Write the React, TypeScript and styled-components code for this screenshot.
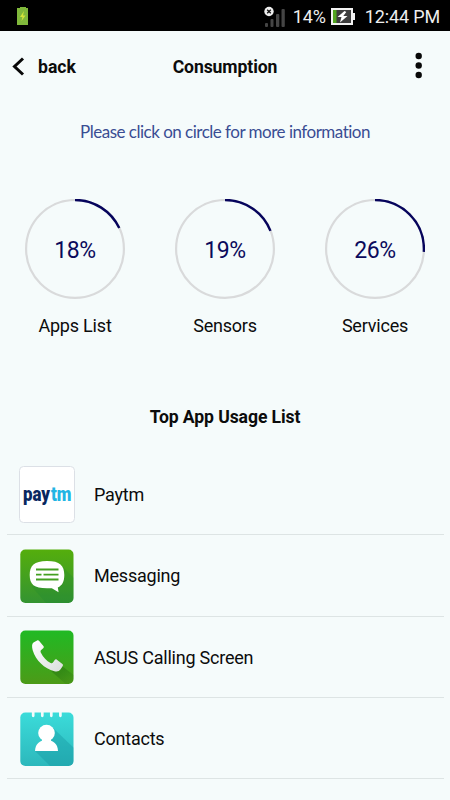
import React from 'react';
import styled, { createGlobalStyle } from 'styled-components';

const GlobalStyle = createGlobalStyle`
  * { box-sizing: border-box; }
  body { margin: 0; background: #f5fbfb; overflow: hidden; }
  svg { display: block; flex: none; }
`;

const Screen = styled.main`
  width: 450px;
  height: 800px;
  overflow: hidden;
  display: flex;
  flex-direction: column;
  background: #f5fbfb;
  color: #0c0c0c;
  font-family: Roboto, 'Liberation Sans', sans-serif;
`;

const StatusBar = styled.div`
  flex: none;
  height: 31px;
  padding: 2px 10px 0 17px;
  display: flex;
  align-items: center;
  background: #000;
  color: #eee;
`;

const StatusText = styled.span<{ $gap: number }>`
  margin-left: ${(p) => p.$gap}px;
  font-size: 18px;
  line-height: 28px;
  letter-spacing: -0.15px;
  white-space: nowrap;
`;

const StatusRight = styled.div`
  display: flex;
  align-items: center;
  margin-left: auto;
`;

const BatteryBox = styled.div`
  margin-left: 5px;
`;

const Header = styled.header`
  flex: none;
  height: 70px;
  padding: 0 24px 0 12px;
  display: grid;
  grid-template-columns: 1fr auto 1fr;
  align-items: center;
`;

const BackButton = styled.button`
  display: flex;
  align-items: center;
  gap: 13px;
  padding: 1px 0 0;
  border: 0;
  background: none;
  color: inherit;
  font: 700 17.6px/24px Roboto, sans-serif;
`;

const PageTitle = styled.h1`
  margin: 1px 0 0;
  padding-left: 12px;
  font-size: 17.6px;
  line-height: 24px;
  font-weight: 700;
  letter-spacing: -0.1px;
`;

const MenuButton = styled.button`
  justify-self: end;
  padding: 0;
  border: 0;
  background: none;
`;

const Hint = styled.p`
  flex: none;
  margin: 19px 0 0;
  text-align: center;
  font: 400 17px/24px Lato, sans-serif;
  letter-spacing: -0.5px;
  color: #3a4d93;
`;

const Gauges = styled.section`
  flex: none;
  margin-top: 55px;
  display: grid;
  grid-template-columns: repeat(3, 150px);
`;

const GaugeCell = styled.div`
  display: flex;
  flex-direction: column;
  align-items: center;
`;

const Dial = styled.div`
  display: grid;
  place-items: center;
  width: 100px;
  height: 100px;
  & > * { grid-area: 1 / 1; }
`;

const Percent = styled.span`
  padding-top: 4px;
  font-size: 23px;
  line-height: 28px;
  letter-spacing: -0.4px;
  color: #0b0a5c;
`;

const GaugeLabel = styled.span`
  margin-top: 15px;
  font-size: 18px;
  line-height: 24px;
  letter-spacing: -0.2px;
`;

const ListTitle = styled.h2`
  flex: none;
  margin: 67px 0 25px;
  text-align: center;
  font-size: 17.6px;
  line-height: 24px;
  font-weight: 700;
  letter-spacing: -0.1px;
`;

const AppList = styled.ul`
  margin: 0 6px 0 7px;
  padding: 0;
  list-style: none;
`;

const AppRow = styled.li`
  height: 81.3px;
  padding: 1px 0 0 12px;
  display: flex;
  align-items: center;
  border-bottom: 1px solid #dde4e4;
`;

const AppName = styled.span`
  margin: 1px 0 0 19px;
  font-size: 18px;
  line-height: 24px;
  letter-spacing: -0.22px;
`;

const gauges = [
  { label: 'Apps List', value: 18 },
  { label: 'Sensors', value: 19 },
  { label: 'Services', value: 26 },
];

function Gauge({ label, value }: { label: string; value: number }) {
  return (
    <GaugeCell>
      <Dial>
        <svg width="100" height="100" viewBox="0 0 100 100" fill="none">
          <circle cx="50" cy="49.9" r="48.9" stroke="#d9dadb" strokeWidth="2.2" />
          <circle cx="50" cy="49.9" r="48.9" stroke="#06045c" strokeWidth="2.4" pathLength="100"
            strokeDasharray={`${value} 100`} transform="rotate(-90 50 49.9)" />
        </svg>
        <Percent>{value}%</Percent>
      </Dial>
      <GaugeLabel>{label}</GaugeLabel>
    </GaugeCell>
  );
}

const SmallBattery = () => (
  <svg width="12" height="19" viewBox="0 0 12 19">
    <path d="M3 1V0h6v1h2v17H0V1z" fill="#80b83b" />
    <path d="M7 4 3 10h2.5L4.5 14 8.5 8.5H6z" fill="#d5e63a" />
  </svg>
);

const Signal = () => (
  <svg width="22" height="22" viewBox="0 0 22 22">
    <g fill="#454545">
      <rect x="1" y="17" width="3" height="4" rx="1" />
      <rect x="6.5" y="13" width="3" height="8" rx="1" />
      <rect x="12" y="8" width="3.3" height="13" rx="1" />
      <rect x="17.5" y="3" width="3.3" height="18" rx="1" />
    </g>
    <circle cx="5" cy="5.5" r="4.7" fill="#eee" />
    <path d="m3.2 3.7 3.6 3.6m0-3.6L3.2 7.3" stroke="#111" strokeWidth="1.3" />
  </svg>
);

const Battery = () => (
  <svg width="24" height="17" viewBox="0 0 24 17">
    <rect x="21" y="5" width="3" height="7" fill="#f2f2f2" />
    <rect width="22" height="17" fill="#f2f2f2" />
    <rect x="2" y="2" width="18" height="13" fill="#3d3d3d" />
    <rect x="2" y="2" width="3.5" height="13" fill="#51a51f" />
    <path d="m13.5 3-7 6h4l-1.5 5.5 7.5-6.5h-4.2l3-4z" fill="#fff" />
  </svg>
);

const PaytmIcon = () => (
  <svg width="56" height="57" viewBox="0 0 56 57">
    <rect x=".5" y=".5" width="55" height="56" rx="4" fill="#fff" stroke="#dce0e6" />
    <g fontFamily="Roboto, sans-serif" fontWeight="900" fontSize="20">
      <text x="4" y="35" textLength="27" lengthAdjust="spacingAndGlyphs" fill="#08275f">pay</text>
      <text x="32" y="35" textLength="20.5" lengthAdjust="spacingAndGlyphs" fill="#22b5e4">tm</text>
    </g>
  </svg>
);

const MessagingIcon = () => (
  <svg width="56" height="56" viewBox="0 0 56 56">
    <defs>
      <linearGradient id="messageFill" x2="0" y2="1">
        <stop stopColor="#55ae0c" /><stop offset="1" stopColor="#339332" />
      </linearGradient>
      <clipPath id="messageClip"><rect x="1.3" y="1.5" width="53.2" height="53.5" rx="5" /></clipPath>
    </defs>
    <g clipPath="url(#messageClip)">
      <rect x="1" y="1" width="54" height="55" fill="url(#messageFill)" />
      <path d="m42 17 14 14v26H29L13 39z" fill="#168032" opacity=".2" />
    </g>
    <path d="M28 13c13 0 17.3 4.6 17.3 14 0 6.5-2 10.5-6.5 12.5l.8 4.8-6.8-4H28c-13 0-17.3-4-17.3-13.3S15 13 28 13z" fill="#fff" />
    <path d="M17 21.5h22.5M17 26.6h5.5M24.5 26.6h15M17 31.5h22.5" stroke="#439f20" strokeWidth="1.9" />
  </svg>
);

const CallIcon = () => (
  <svg width="56" height="56" viewBox="0 0 56 56">
    <defs>
      <linearGradient id="callFill" x2="0" y2="1">
        <stop stopColor="#20ba24" /><stop offset="1" stopColor="#4d9a17" />
      </linearGradient>
      <linearGradient id="phoneFill" x2="1" y2="1">
        <stop stopColor="#fff" /><stop offset="1" stopColor="#d9dedb" />
      </linearGradient>
      <linearGradient id="callShade" x1=".4" y1=".3" x2="1" y2="1">
        <stop stopColor="#246e10" stopOpacity=".45" /><stop offset="1" stopColor="#246e10" stopOpacity="0" />
      </linearGradient>
      <clipPath id="callClip"><rect x="1.3" y="1.5" width="53.2" height="53.5" rx="5" /></clipPath>
    </defs>
    <g clipPath="url(#callClip)">
      <rect x="1" y="1" width="54" height="55" fill="url(#callFill)" />
      <path d="m43 37 13 10v10h-7L32 42z" fill="url(#callShade)" />
    </g>
    <path d="M14.5 13.5l3.6-2c.8-.4 1.6-.2 2.1.5l4.2 5c.6.8.5 1.6-.2 2.2l-2 1.7c-.8.7-.8 1.7-.3 2.8 2.2 4.5 5.7 8.2 9.7 10.2 1 .5 1.8.3 2.4-.5l1.7-2.4c.6-.8 1.4-.9 2.2-.3l5.5 4.4c.7.6.8 1.3.2 2.1l-2.2 3.3c-1.2 1.8-3.3 2.3-6 1.7-10-2.5-18.7-11-21.700-21-.9-3.300-1-6.500.8-7.700z" fill="url(#phoneFill)" />
  </svg>
);

const ContactsIcon = () => (
  <svg width="56" height="56" viewBox="0 0 56 56">
    <defs>
      <linearGradient id="contactFill" x2="0" y2="1">
        <stop stopColor="#3bdcda" /><stop offset="1" stopColor="#2cb7bb" />
      </linearGradient>
      <clipPath id="contactClip"><rect x="1.3" y="1.5" width="53.2" height="53.5" rx="5" /></clipPath>
    </defs>
    <g clipPath="url(#contactClip)">
      <rect x="1" y="1" width="54" height="55" fill="url(#contactFill)" />
      <path d="m34 17 22 21v19H33L16 40z" fill="#128f9c" opacity=".35" />
    </g>
    <path d="M14.2 0v4.8M23.3 0v4.8M32.3 0v4.8M41.4 0v4.8" stroke="#f5fbfb" strokeWidth="2.7" strokeLinecap="round" />
    <circle cx="27.5" cy="22" r="8.3" fill="#fff" />
    <path d="M16 40c.3-7 4.5-11 11.5-11S38.7 33 39 40z" fill="#fff" />
    <path d="M23 28h9v4h-9z" fill="#fff" />
  </svg>
);

const apps = [
  { name: 'Paytm', Icon: PaytmIcon },
  { name: 'Messaging', Icon: MessagingIcon },
  { name: 'ASUS Calling Screen', Icon: CallIcon },
  { name: 'Contacts', Icon: ContactsIcon },
];

export default function App() {
  return (
    <>
      <GlobalStyle />
      <Screen>
        <StatusBar>
          <SmallBattery />
          <StatusRight>
            <Signal />
            <StatusText $gap={7}>14%</StatusText>
            <BatteryBox><Battery /></BatteryBox>
            <StatusText $gap={10}>12:44 PM</StatusText>
          </StatusRight>
        </StatusBar>
        <Header>
          <BackButton>
            <svg width="13" height="20" viewBox="0 0 13 20" fill="none">
              <path d="m11 1.5-8.5 8 8.5 8" stroke="#080808" strokeWidth="3" />
            </svg>
            back
          </BackButton>
          <PageTitle>Consumption</PageTitle>
          <MenuButton aria-label="More options">
            <svg width="14" height="28" viewBox="0 0 14 28" fill="#080808">
              <circle cx="6.7" cy="4" r="3.2" />
              <circle cx="6.7" cy="13.5" r="3.2" />
              <circle cx="6.7" cy="23" r="3.2" />
            </svg>
          </MenuButton>
        </Header>
        <Hint>Please click on circle for more information</Hint>
        <Gauges>
          {gauges.map((g) => <Gauge key={g.label} {...g} />)}
        </Gauges>
        <ListTitle>Top App Usage List</ListTitle>
        <AppList>
          {apps.map(({ name, Icon }) => (
            <AppRow key={name}>
              <Icon />
              <AppName>{name}</AppName>
            </AppRow>
          ))}
        </AppList>
      </Screen>
    </>
  );
}
